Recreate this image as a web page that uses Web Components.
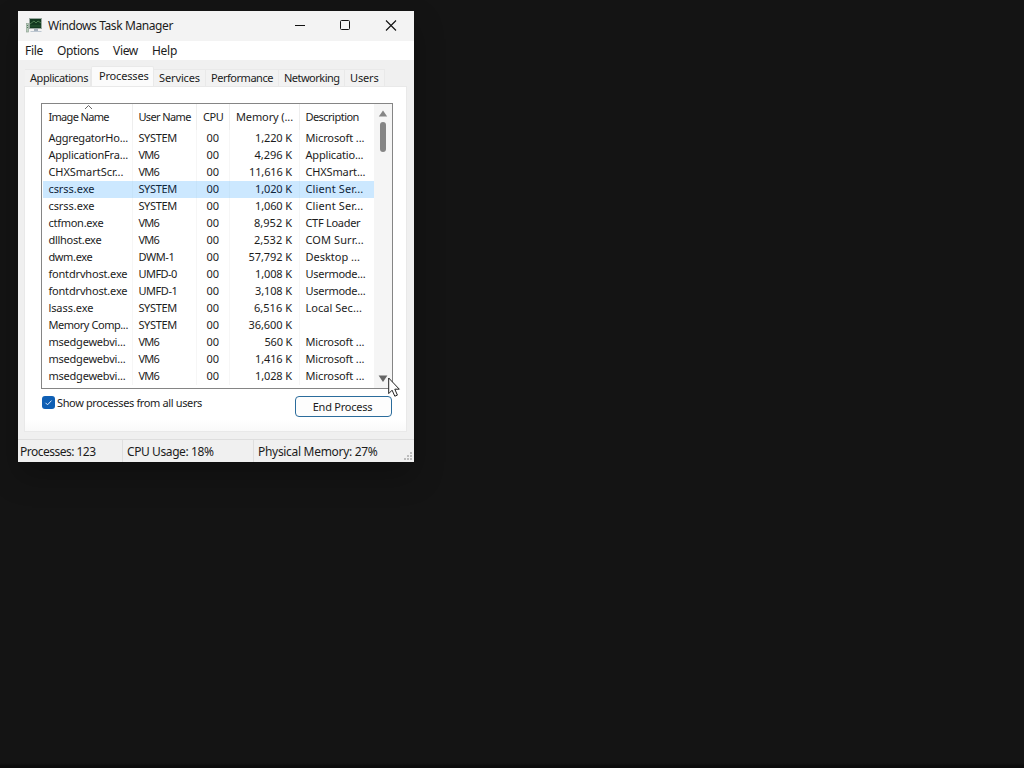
<!DOCTYPE html>
<html lang="en">
<head>
<meta charset="utf-8">
<title>Windows Task Manager</title>
<style>
    html, body { margin: 0; height: 100%; }
    body {
        box-sizing: border-box;
        padding: 11px 0 0 18px;
        overflow: hidden;
        background: linear-gradient(to top, #0c0c0c 2px, #141414 5px);
        font: 11px/17px "Noto Sans", "Open Sans", sans-serif;
        color: #1c1c1c;
    }
</style>
</head>
<body>
<task-window></task-window>
<mouse-pointer></mouse-pointer>

<script>
// a single line of text, tracked so that it fills the width it is given
class FitText extends HTMLElement {
    constructor() {
        super();
        this.attachShadow({ mode: 'open' });
        this.shadowRoot.innerHTML = `
        <style>
            :host { display: inline-block; white-space: nowrap; vertical-align: top; }
            span { display: inline-block; vertical-align: top; }
        </style>
        <span><slot></slot></span>`;
    }

    connectedCallback() {
        const width = parseFloat(this.getAttribute('w'));
        const span = this.shadowRoot.querySelector('span');
        const count = this.textContent.length;
        const natural = span.getBoundingClientRect().width;

        span.style.letterSpacing = `${(width - natural) / count}px`;
    }
}

// caption bar with the program icon and the three window buttons
class TitleBar extends HTMLElement {
    constructor() {
        super();
        this.attachShadow({ mode: 'open' });
        this.shadowRoot.innerHTML = `
        <style>
            :host {
                display: flex;
                align-items: center;
                height: 30px;
                background: #f3f3f3;
                font-size: 12px;
            }
            .icon { width: 17px; height: 16px; margin: 0 5px 0 8px; }
            .title { flex: 1; padding-bottom: 1px; }
            .buttons { display: flex; align-items: center; padding-right: 17px; gap: 34px; }
            .buttons svg { width: 12px; height: 12px; fill: none; stroke: #111; }
        </style>
        <svg class="icon" viewBox="0 0 17 16">
            <rect x="0.5" y="5.5" width="2" height="8.5" fill="#b9cdbd" stroke="#92a596" stroke-width=".7"/>
            <path d="M1 7.5h1M1 9.5h1" stroke="#557b60"/>
            <rect x="3" y="0" width="13" height="11" fill="#9aa9a1"/>
            <rect x="4" y="1" width="11" height="9" fill="#123a20"/>
            <path d="M4 6l4-3 2 2 2-2 3 2" fill="none" stroke="#4c7c51"/>
            <path d="M4 8h11" stroke="#285b34"/>
            <path d="M8 11h4v2H8z" fill="#a7b2bd"/>
            <path d="M5 13h10l1 1H4z" fill="#bdc7d1"/>
        </svg>
        <div class="title"><fit-text w="125">Windows Task Manager</fit-text></div>
        <div class="buttons">
            <svg viewBox="0 0 12 12"><path d="M2 5.5h10"/></svg>
            <svg viewBox="0 0 12 12"><rect x="1.5" y=".5" width="9" height="9" rx="1"/></svg>
            <svg viewBox="0 0 12 12"><path d="M1 .5l10 10M11 .5L1 10.5" stroke-width="1.1"/></svg>
        </div>`;
    }
}

class MenuBar extends HTMLElement {
    constructor() {
        super();
        this.attachShadow({ mode: 'open' });
        this.shadowRoot.innerHTML = `
        <style>
            :host {
                display: flex;
                align-items: center;
                gap: 14px;
                height: 19px;
                padding-left: 7px;
                background: #fff;
                font-size: 12px;
            }
        </style>
        <fit-text w="18">File</fit-text>
        <fit-text w="42">Options</fit-text>
        <fit-text w="25">View</fit-text>
        <fit-text w="25">Help</fit-text>`;
    }
}

// one tab of the strip; the selected one stands a little higher
class TabItem extends HTMLElement {
    constructor() {
        super();
        this.attachShadow({ mode: 'open' });
        this.shadowRoot.innerHTML = `
        <style>
            :host {
                display: block;
                box-sizing: border-box;
                height: 18px;
                padding-left: 5px;
                border: 1px solid #e9e9e9;
                border-width: 1px 1px 0 0;
                background: #f2f2f2;
                line-height: 15px;
            }
            :host([selected]) {
                height: 21px;
                padding-left: 7px;
                border-left-width: 1px;
                border-radius: 2px 2px 0 0;
                background: #fbfbfb;
                line-height: 18px;
            }
        </style>
        <slot></slot>`;
    }
}

// the list of processes: column headers, rows and scroll bar
class ProcessList extends HTMLElement {
    constructor() {
        super();

        // every cell is a text and the width it takes
        this.props = {
            selected: 3,
            rows: [
                ['AggregatorHo...', 79.5, 'SYSTEM', 38.5, '1,220 K', 37, 'Microsoft ...', 59],
                ['ApplicationFra...', 79.5, 'VM6', 20.5, '4,296 K', 37.5, 'Applicatio...', 58],
                ['CHXSmartScr...', 75, 'VM6', 20.5, '11,616 K', 43, 'CHXSmart...', 60],
                ['csrss.exe', 46, 'SYSTEM', 38.5, '1,020 K', 37, 'Client Ser...', 58],
                ['csrss.exe', 46, 'SYSTEM', 38.5, '1,060 K', 37, 'Client Ser...', 58],
                ['ctfmon.exe', 55, 'VM6', 20.5, '8,952 K', 38, 'CTF Loader', 55],
                ['dllhost.exe', 53, 'VM6', 20.5, '2,532 K', 38, 'COM Surr...', 58.5],
                ['dwm.exe', 44, 'DWM-1', 36, '57,792 K', 43.5, 'Desktop ...', 54.5],
                ['fontdrvhost.exe', 79, 'UMFD-0', 38.5, '1,008 K', 37, 'Usermode...', 60],
                ['fontdrvhost.exe', 79, 'UMFD-1', 39, '3,108 K', 37, 'Usermode...', 60],
                ['lsass.exe', 45, 'SYSTEM', 38.5, '6,516 K', 38, 'Local Sec...', 56.5],
                ['Memory Comp...', 79.5, 'SYSTEM', 38.5, '36,600 K', 43.5, '', 0],
                ['msedgewebvi...', 77, 'VM6', 20.5, '560 K', 27.5, 'Microsoft ...', 59],
                ['msedgewebvi...', 77, 'VM6', 20.5, '1,416 K', 37, 'Microsoft ...', 59],
                ['msedgewebvi...', 77, 'VM6', 20.5, '1,028 K', 37, 'Microsoft ...', 59],
            ],
        };

        this.attachShadow({ mode: 'open' });
        this.shadowRoot.innerHTML = `
        <style>
            :host {
                display: flex;
                box-sizing: border-box;
                width: 352px;
                height: 286px;
                border: 1px solid #858585;
                background: #fff;
            }
            .table { width: 332px; }
            .header, .row {
                display: grid;
                grid-template-columns: 91px 64px 33px 70px 74px;
            }
            .header > div, .row > div {
                box-sizing: border-box;
                border-right: 1px solid #f6f6f6;
                padding-left: 5.4px;
            }
            .header { height: 26px; }
            .header > div { position: relative; padding-top: 4px; border-color: #eee; }
            .header > div:first-child, .row > div:first-child { padding-left: 6.4px; }
            .header > div:nth-child(3), .header > div:nth-child(4) { padding-left: 6px; }
            .row { height: 17px; line-height: 15px; }
            .row > div:nth-child(3) { padding-left: 9.4px; }
            .row > div:nth-child(4) { text-align: right; padding: 0 7px 0 0; }
            .header > div:last-child, .row > div:last-child { border-right: 0; }
            .selected {
                background: linear-gradient(to right, #fff 1px, #cce8ff 1px);
                color: #10263a;
            }
            .selected > div { border-color: #c6e3f9; }
            .sort { position: absolute; left: 42px; top: 0; width: 10px; height: 6px; }
            .scroll {
                display: flex;
                flex-direction: column;
                align-items: center;
                flex: 1;
                padding: 6px 0 6px;
                background: #f5f5f5;
            }
            .scroll svg { width: 10px; height: 7px; fill: #858585; }
            .scroll svg:last-child { fill: #666; }
            .thumb { width: 6px; height: 30px; margin: 5px 0 auto; border-radius: 3px; background: #858585; }
        </style>
        <div class="table">
            <div class="header">
                <div>
                    <svg class="sort" viewBox="0 0 10 6"><path d="M1 5l3.5-3.5L8 5" fill="none" stroke="#666"/></svg>
                    <fit-text w="60.5">Image Name</fit-text>
                </div>
                <div><fit-text w="52.5">User Name</fit-text></div>
                <div><fit-text w="20.5">CPU</fit-text></div>
                <div><fit-text w="57">Memory (...</fit-text></div>
                <div><fit-text w="53.5">Description</fit-text></div>
            </div>
            <div id="rows"></div>
        </div>
        <div class="scroll">
            <svg viewBox="0 0 10 7"><path d="M5 .5L9.2 6.5H.8z"/></svg>
            <div class="thumb"></div>
            <svg viewBox="0 0 10 7"><path d="M5 7L9.4 .5H.6z"/></svg>
        </div>`;
    }

    connectedCallback() {
        this.shadowRoot.querySelector('#rows').innerHTML = this.props.rows.map((row, i) => {
            const [name, nameW, user, userW, memory, memoryW, desc, descW] = row;
            return `<div class="row ${i === this.props.selected ? 'selected' : ''}">
                <div><fit-text w="${nameW}">${name}</fit-text></div>
                <div><fit-text w="${userW}">${user}</fit-text></div>
                <div><fit-text w="12.5">00</fit-text></div>
                <div><fit-text w="${memoryW}">${memory}</fit-text></div>
                <div>${desc ? `<fit-text w="${descW}">${desc}</fit-text>` : ''}</div>
            </div>`;
        }).join('');
    }
}

class CheckOption extends HTMLElement {
    constructor() {
        super();
        this.attachShadow({ mode: 'open' });
        this.shadowRoot.innerHTML = `
        <style>
            :host { display: flex; align-items: center; gap: 2px; height: 13px; }
            svg { width: 13px; height: 13px; }
        </style>
        <svg viewBox="0 0 13 13">
            <rect width="13" height="13" rx="3" fill="#0f5fb4"/>
            <path d="M3.5 6.8l2 2 4-4.2" fill="none" stroke="#d8eaff"/>
        </svg>
        <slot></slot>`;
    }
}

class PushButton extends HTMLElement {
    constructor() {
        super();
        this.attachShadow({ mode: 'open' });
        this.shadowRoot.innerHTML = `
        <style>
            :host {
                display: flex;
                align-items: center;
                justify-content: center;
                box-sizing: border-box;
                width: 97px;
                height: 21px;
                padding-right: 2px;
                border: 1px solid #2b6c9c;
                border-radius: 4px;
                background: #fdfdfd;
            }
        </style>
        <slot></slot>`;
    }
}

class StatusBar extends HTMLElement {
    constructor() {
        super();
        this.attachShadow({ mode: 'open' });
        this.shadowRoot.innerHTML = `
        <style>
            :host {
                display: grid;
                grid-template-columns: 105px 131px 1fr 10px;
                box-sizing: border-box;
                height: 23px;
                border-top: 1px solid #dedede;
                background: #f0f0f0;
                font-size: 12px;
                line-height: 24px;
            }
            div { box-sizing: border-box; padding-left: 4px; border-right: 1px solid #dfdfdf; height: 22px; }
            div:nth-of-type(1) { padding-left: 2px; }
            div:nth-of-type(3) { border: 0; }
            svg { align-self: end; width: 10px; height: 10px; fill: #bcbcbc; }
        </style>
        <div><fit-text w="75.5">Processes: 123</fit-text></div>
        <div><fit-text w="86.5">CPU Usage: 18%</fit-text></div>
        <div><fit-text w="119.5">Physical Memory: 27%</fit-text></div>
        <svg viewBox="0 0 10 10"><path d="M6 0h2v2H6zM3 3h2v2H3zM6 3h2v2H6zM0 6h2v2H0zM3 6h2v2H3zM6 6h2v2H6z"/></svg>`;
    }
}

class MousePointer extends HTMLElement {
    constructor() {
        super();
        this.attachShadow({ mode: 'open' });
        this.shadowRoot.innerHTML = `
        <style>
            :host { position: absolute; left: 388px; top: 377px; width: 13px; height: 21px; }
            svg { display: block; }
        </style>
        <svg width="13" height="21" viewBox="0 0 13 21">
            <path d="M.7 1v15.6l3.4-3.4 2.7 6 2.6-1.1-2.6-5.9h4.5z" fill="#fff" stroke="#222"/>
        </svg>`;
    }
}

// the window itself, it puts all the parts together
class TaskWindow extends HTMLElement {
    constructor() {
        super();
        this.attachShadow({ mode: 'open' });
        this.shadowRoot.innerHTML = `
        <style>
            :host {
                display: flex;
                flex-direction: column;
                width: 396px;
                height: 451px;
                background: #f0f0f0;
                box-shadow: 0 14px 28px rgba(0, 0, 0, .25);
            }
            .tabs { display: flex; align-items: flex-end; height: 27px; padding-left: 7px; }
            .pane {
                box-sizing: border-box;
                width: 383px;
                height: 346px;
                margin: -1px 0 0 6px;
                padding: 16px 0 0 16px;
                border: 1px solid #e9e9e9;
                background: linear-gradient(to top, #f9f9f9, #fff 12px);
            }
            .actions {
                display: flex;
                justify-content: space-between;
                box-sizing: border-box;
                width: 351px;
                padding: 7px 0 0 1px;
            }
            status-bar { margin-top: auto; }
        </style>
        <title-bar></title-bar>
        <menu-bar></menu-bar>
        <div class="tabs">
            <tab-item style="width: 66px"><fit-text w="58">Applications</fit-text></tab-item>
            <tab-item selected style="width: 63px"><fit-text w="49.5">Processes</fit-text></tab-item>
            <tab-item style="width: 52px"><fit-text w="41">Services</fit-text></tab-item>
            <tab-item style="width: 73px"><fit-text w="62">Performance</fit-text></tab-item>
            <tab-item style="width: 66px"><fit-text w="55.5">Networking</fit-text></tab-item>
            <tab-item style="width: 40px"><fit-text w="28.5">Users</fit-text></tab-item>
        </div>
        <div class="pane">
            <process-list></process-list>
            <div class="actions">
                <check-option><fit-text w="145">Show processes from all users</fit-text></check-option>
                <push-button><fit-text w="59.5">End Process</fit-text></push-button>
            </div>
        </div>
        <status-bar></status-bar>`;
    }
}

// parents first, so that the texts are in place when they are measured
customElements.define('task-window', TaskWindow);
customElements.define('title-bar', TitleBar);
customElements.define('menu-bar', MenuBar);
customElements.define('tab-item', TabItem);
customElements.define('process-list', ProcessList);
customElements.define('check-option', CheckOption);
customElements.define('push-button', PushButton);
customElements.define('status-bar', StatusBar);
customElements.define('mouse-pointer', MousePointer);
customElements.define('fit-text', FitText);
</script>
</body>
</html>
